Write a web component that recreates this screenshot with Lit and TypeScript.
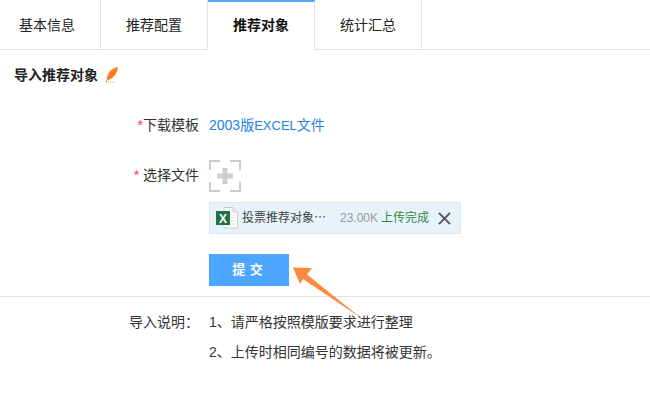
import { LitElement, css, html } from "lit";
import { customElement } from "lit/decorators.js";

const tabs = ["基本信息", "推荐配置", "推荐对象", "统计汇总"];

@customElement("app-root")
export class AppRoot extends LitElement {
    static styles = css`
    :host {
        display: block;
        position: relative;
        height: 401px;
        overflow: hidden;
        background: #fff;
        color: #333;
        font: 14px/20px "Liberation Sans", "Noto Sans CJK SC", sans-serif;
    }

    .tabs {
        display: flex;
        height: 50px;
        box-sizing: border-box;
        border-bottom: 1px solid #e2e2e2;
    }

    .tab {
        box-sizing: border-box;
        width: 107px;
        height: 50px;
        padding-top: 15px;
        text-align: center;
        border-right: 1px solid #e2e2e2;
        color: #222;
    }

    .tab:first-child {
        width: 101px;
        padding-right: 6px;
    }

    .tab.active {
        height: 50px;
        background: #fff;
        border-top: 2px solid #4da6ff;
        padding-top: 13px;
        font-weight: bold;
        color: #111;
    }

    .heading {
        display: flex;
        align-items: center;
        gap: 7px;
        height: 20px;
        margin: 15px 0 0 14px;
        font-weight: bold;
        color: #222;
    }

    .row {
        display: flex;
        margin-top: 30px;
    }

    .label {
        width: 199px;
        text-align: right;
        flex: none;
    }

    .star {
        color: #f33;
    }

    .value {
        margin-left: 10px;
    }

    .link {
        color: #2183eb;
    }

    .latin {
        font-size: 13px;
        line-height: 1;
    }

    .picker {
        display: block;
        margin-top: -5px;
    }

    .file {
        display: flex;
        align-items: center;
        box-sizing: border-box;
        width: 252px;
        height: 32px;
        margin: 10px 0 0 209px;
        padding-left: 6px;
        background: #e8f2fb;
        border: 1px solid #dde6ee;
        font-size: 12px;
    }

    .file .name {
        margin-left: 4px;
        width: 98px;
        color: #444;
    }

    .file .size {
        color: #999;
    }

    .file .done {
        margin-left: 3px;
        color: #2e8b3d;
    }

    .file svg.close {
        margin-left: 9px;
    }

    .submit {
        display: block;
        box-sizing: border-box;
        width: 80px;
        height: 32px;
        margin: 20px 0 0 209px;
        border: 0;
        padding: 0 3px 0 0;
        background: #4da6ff;
        color: #fff;
        font: bold 13px/32px "Liberation Sans", "Noto Sans CJK SC", sans-serif;
        word-spacing: 1px;
    }

    .notes {
        display: grid;
        grid-template-columns: 199px auto;
        column-gap: 10px;
        row-gap: 10px;
        margin-top: 10px;
        padding-top: 15px;
        border-top: 1px solid #e2e2e2;
    }

    .notes .caption {
        text-align: right;
    }

    .arrow {
        position: absolute;
        left: 290px;
        top: 262px;
    }
    `;

    render() {
        return html`
        <div class="tabs">
            ${tabs.map((t, i) => html`<div class="tab ${i === 2 ? "active" : ""}">${t}</div>`)}
        </div>
        <div class="heading">
            导入推荐对象
            <svg width="14" height="16" viewBox="0 0 14 16">
                <path d="M13 0C8 1 3 4 2 11c0 1 0 1.500 .5 2C8 12 12 7 13 0z" fill="#f97d1c"/>
                <path d="M1 15h9" stroke="#f9a35c" stroke-dasharray="1 1" fill="none"/>
                <path d="M7 6L1 15" stroke="#f97d1c" fill="none"/>
            </svg>
        </div>
        <div class="row">
            <div class="label"><span class="star">*</span>下载模板</div>
            <div class="value link">2003版<span class="latin">EXCEL</span>文件</div>
        </div>
        <div class="row">
            <div class="label"><span class="star">*</span> 选择文件</div>
            <div class="value">
                <svg class="picker" width="32" height="32" viewBox="0 0 32 32" fill="none" stroke="#ccc" stroke-width="2">
                    <path d="M1 10V1h10M21 1h10v9M31 22v9H21M11 31H1v-9"/>
                    <path d="M8 16h16M16 8v16" stroke-width="5" stroke="#d0d0d0"/>
                </svg>
            </div>
        </div>
        <div class="file">
            <svg width="22" height="22" viewBox="0 0 22 22">
                <path d="M8 .5h9l4.500 4.500v16H8z" fill="#fff" stroke="#ccc"/>
                <path d="M17 .5v4.500h4.500" fill="#eee" stroke="#ccc"/>
                <path d="M15 8h4M15 11h4M15 14h4M15 17h4" stroke="#ddd"/>
                <rect x="0" y="4" width="14" height="14" fill="#217346"/>
                <text x="3" y="15.500" fill="#fff" font-size="12" font-weight="bold">X</text>
            </svg>
            <span class="name">投票推荐对象⋯</span>
            <span class="size">23.00K</span>
            <span class="done">上传完成</span>
            <svg class="close" width="13" height="13" viewBox="0 0 14 14">
                <path d="M1 1l12 12M13 1L1 13" stroke="#555" stroke-width="2" fill="none"/>
            </svg>
        </div>
        <button class="submit">提 交</button>
        <div class="notes">
            <div class="caption">导入说明：</div>
            <div>1、请严格按照模版要求进行整理</div>
            <div></div>
            <div>2、上传时相同编号的数据将被更新。</div>
        </div>
        <svg class="arrow" width="72" height="58" viewBox="0 0 72 58">
            <path d="M3 5.500L22 6L17 12.500L71 56L13 17L10 22z" fill="#fb8a3c"/>
        </svg>
        `;
    }
}

declare global {
    interface HTMLElementTagNameMap {
        "app-root": AppRoot
    }
}
